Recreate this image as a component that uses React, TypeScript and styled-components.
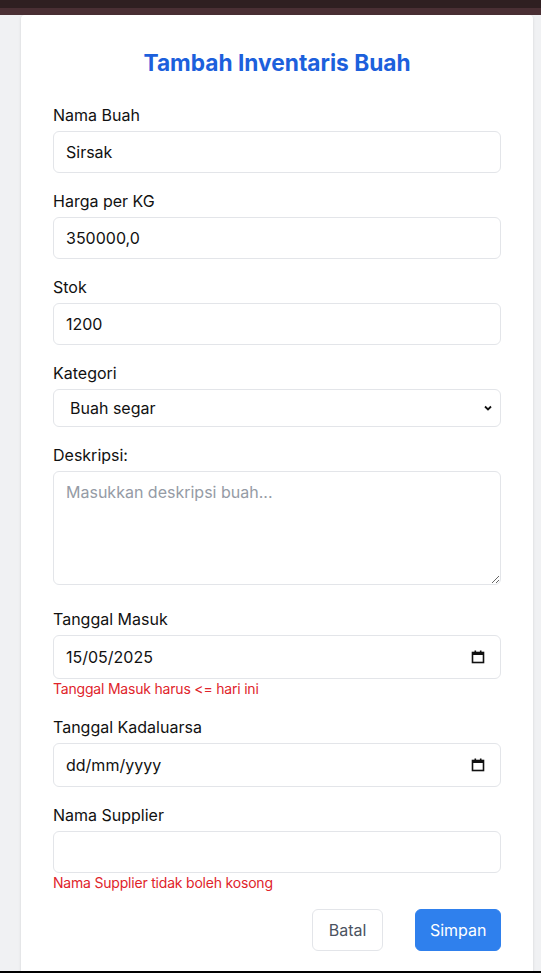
import React from "react";
import styled, { createGlobalStyle } from "styled-components";

const GlobalStyle = createGlobalStyle`
  * { box-sizing: border-box; }
  html, body { margin: 0; padding: 0; }
  body {
    background: #f0f1f3;
    font-family: Inter, "Noto Sans", "Liberation Sans", sans-serif;
    color: #111;
    overflow: hidden;
  }
`;

const TopBar = styled.div`
  height: 15px;
  background: linear-gradient(to bottom, #2f1f21 0, #2f1f21 8px, #4a2f34 8px, #4a2f34 15px);
`;

const Page = styled.div`
  padding: 0 8px 0 21px;
`;

const Card = styled.div`
  width: 512px;
  background: #fff;
  border-radius: 4px 4px 0 0;
  box-shadow: 0 1px 3px rgba(0, 0, 0, 0.12);
  padding: 32px 32px 32px;
  min-height: 958px;
`;

const Title = styled.h1`
  margin: 0 0 24px;
  font-size: 22.7px;
  line-height: 32px;
  font-weight: 700;
  color: #1c60dc;
  text-align: center;
`;

const Field = styled.div`
  display: flex;
  flex-direction: column;
  margin-bottom: 16px;
`;

const Label = styled.label`
  font-size: 16px;
  line-height: 24px;
  font-weight: 400;
  color: #111;
  margin-bottom: 4px;
`;

const Input = styled.input<{ $tall?: boolean }>`
  width: 100%;
  height: ${(p) => (p.$tall ? 44 : 42)}px;
  border: 1px solid #e3e5e9;
  border-radius: 6px;
  padding: 0 12px;
  font-family: inherit;
  font-size: 16px;
  color: #111;
  background: #fff;
  outline: none;
`;

const InputWrap = styled.div`
  position: relative;
`;

const CalendarIcon = styled.svg`
  position: absolute;
  right: 16px;
  top: 50%;
  transform: translateY(-50%);
  width: 14px;
  height: 14px;
  pointer-events: none;
`;

const Select = styled.select`
  width: 100%;
  height: 38px;
  border: 1px solid #e3e5e9;
  border-radius: 6px;
  padding: 0 12px 0 16px;
  font-family: inherit;
  font-size: 16px;
  color: #111;
  background: #fff;
  appearance: none;
  -webkit-appearance: none;
  outline: none;
`;

const Chevron = styled.svg`
  position: absolute;
  right: 8px;
  top: 50%;
  transform: translateY(-50%);
  width: 10px;
  height: 10px;
  pointer-events: none;
`;

const TextArea = styled.textarea`
  width: 100%;
  height: 114px;
  border: 1px solid #e3e5e9;
  border-radius: 6px;
  padding: 8px 12px;
  font-family: inherit;
  font-size: 16px;
  line-height: 24px;
  color: #111;
  background: #fff;
  outline: none;
  display: block;
  margin-bottom: 6px;
  &::placeholder { color: #959ba5; }
`;

const ErrorText = styled.div`
  font-size: 14px;
  line-height: 20px;
  color: #e0242b;
  letter-spacing: -0.2px;
`;

const Actions = styled.div`
  display: flex;
  justify-content: flex-end;
  gap: 32px;
`;

const Button = styled.button<{ $primary?: boolean }>`
  height: 42px;
  padding: 0 ${(p) => (p.$primary ? 13.5 : 16)}px;
  border-radius: 6px;
  font-family: inherit;
  font-size: 16px;
  border: 1px solid ${(p) => (p.$primary ? "#2f80ed" : "#e3e5e9")};
  background: ${(p) => (p.$primary ? "#2f80ed" : "#fff")};
  color: ${(p) => (p.$primary ? "#fff" : "#4b5361")};
`;

const BottomEdge = styled.div`
  position: fixed;
  left: 0;
  right: 0;
  bottom: 0;
  height: 2px;
  background: #000;
`;

const Cal = () => (
  <CalendarIcon viewBox="0 0 14 14">
    <rect x="1.5" y="2.5" width="11" height="10" fill="none" stroke="#111" strokeWidth="1.6" />
    <rect x="1.5" y="2.5" width="11" height="2.5" fill="#111" />
    <rect x="3.5" y="0.5" width="1.6" height="2.5" fill="#111" />
    <rect x="8.9" y="0.5" width="1.6" height="2.5" fill="#111" />
  </CalendarIcon>
);

export default function App() {
  return (
    <>
      <GlobalStyle />
      <TopBar />
      <Page>
        <Card>
          <Title>Tambah Inventaris Buah</Title>
          <Field>
            <Label>Nama Buah</Label>
            <Input defaultValue="Sirsak" />
          </Field>
          <Field>
            <Label>Harga per KG</Label>
            <Input defaultValue="350000,0" />
          </Field>
          <Field>
            <Label>Stok</Label>
            <Input defaultValue="1200" />
          </Field>
          <Field>
            <Label>Kategori</Label>
            <InputWrap>
              <Select defaultValue="segar">
                <option value="segar">Buah segar</option>
                <option value="kering">Buah kering</option>
              </Select>
              <Chevron viewBox="0 0 10 10">
                <path d="M2 3.5 L5 6.5 L8 3.5" fill="none" stroke="#111" strokeWidth="1.8" />
              </Chevron>
            </InputWrap>
          </Field>
          <Field>
            <Label>Deskripsi:</Label>
            <TextArea placeholder="Masukkan deskripsi buah..." />
          </Field>
          <Field>
            <Label>Tanggal Masuk</Label>
            <InputWrap>
              <Input $tall defaultValue="15/05/2025" readOnly />
              <Cal />
            </InputWrap>
            <ErrorText>Tanggal Masuk harus &lt;= hari ini</ErrorText>
          </Field>
          <Field>
            <Label>Tanggal Kadaluarsa</Label>
            <InputWrap>
              <Input $tall defaultValue="dd/mm/yyyy" readOnly />
              <Cal />
            </InputWrap>
          </Field>
          <Field>
            <Label>Nama Supplier</Label>
            <Input defaultValue="" />
            <ErrorText>Nama Supplier tidak boleh kosong</ErrorText>
          </Field>
          <Actions>
            <Button>Batal</Button>
            <Button $primary>Simpan</Button>
          </Actions>
        </Card>
      </Page>
      <BottomEdge />
    </>
  );
}
